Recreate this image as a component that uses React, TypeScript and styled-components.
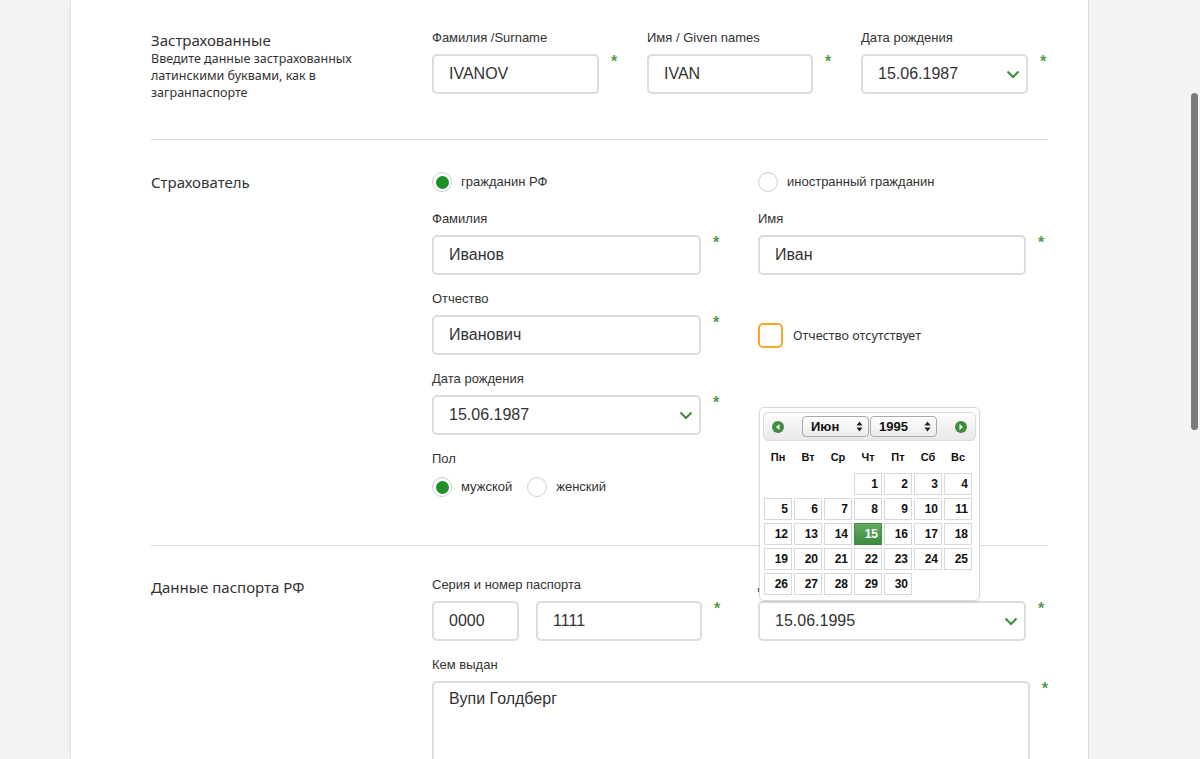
import React from 'react';
import styled, { createGlobalStyle } from 'styled-components';

const GlobalStyle = createGlobalStyle`
  html, body { margin: 0; padding: 0; background: #f3f3f3; overflow: hidden; }
  body { font-family: "Liberation Sans", Arial, sans-serif; color: #333; }
  * { box-sizing: border-box; }
`;

const Page = styled.div`
  height: 759px;
  display: flex;
  padding-left: 70px;
  overflow: hidden;
`;

const Panel = styled.main`
  width: 1019px;
  flex: none;
  background: #fff;
  border-left: 1px solid #e4e4e4;
  border-right: 1px solid #dcdcdc;
  box-shadow: -5px 0 6px -5px rgba(0, 0, 0, 0.08);
  padding: 0 40px 0 80px;
`;

const Section = styled.section<{ $top: number; $bottom: number; $last?: boolean }>`
  display: grid;
  grid-template-columns: 281px 1fr;
  padding: ${(p) => p.$top}px 0 ${(p) => p.$bottom}px;
  border-bottom: ${(p) => (p.$last ? 'none' : '1px solid #dcdcdc')};
`;

const Aside = styled.div`
  display: flex;
  flex-direction: column;
  font-family: "Noto Sans", "Open Sans", sans-serif;
  color: #333;
`;

const Title = styled.h2`
  margin: 0;
  font-size: 15px;
  line-height: 20px;
  font-weight: 400;
`;

const Hint = styled.p`
  margin: 0;
  font-size: 12.5px;
  line-height: 17px;
  width: 215px;
`;

const ThreeCols = styled.div`
  display: grid;
  grid-template-columns: 215px 214px auto;
  align-items: start;
`;

const TwoCols = styled.div`
  display: grid;
  grid-template-columns: 326px 1fr;
  row-gap: 16px;
  align-items: start;
`;

const Field = styled.div<{ $span?: boolean }>`
  display: flex;
  flex-direction: column;
  position: relative;
  grid-column: ${(p) => (p.$span ? '1 / span 2' : 'auto')};
`;

const Label = styled.label`
  font-size: 13px;
  line-height: 16px;
  margin-bottom: 8px;
  color: #333;
  white-space: nowrap;
`;

const Control = styled.div`
  display: flex;
  align-items: flex-start;
  position: relative;
`;

const Inputs = styled.div`
  display: flex;
  gap: 17px;
`;

const Input = styled.input<{ $w: number }>`
  width: ${(p) => p.$w}px;
  height: 40px;
  border: 2px solid #dcdcdc;
  border-radius: 5px;
  padding: 0 15px;
  font-family: "Liberation Sans", Arial, sans-serif;
  font-size: 16px;
  color: #333;
  background: #fff;
  outline: none;
`;

const TextArea = styled.textarea<{ $w: number }>`
  width: ${(p) => p.$w}px;
  height: 100px;
  border: 2px solid #dcdcdc;
  border-radius: 5px;
  padding: 6px 15px;
  font-family: "Liberation Sans", Arial, sans-serif;
  font-size: 16px;
  line-height: 20px;
  color: #333;
  resize: none;
  outline: none;
`;

const SelectBox = styled.div<{ $w: number }>`
  width: ${(p) => p.$w}px;
  height: 40px;
  border: 2px solid #dcdcdc;
  border-radius: 5px;
  padding: 0 6px 0 15px;
  display: flex;
  align-items: center;
  justify-content: space-between;
  font-size: 16px;
  color: #333;
  background: #fff;
`;

const Req = styled.span`
  color: #4f9d4f;
  font-weight: 700;
  font-size: 16px;
  line-height: 16px;
  margin-left: 12px;
  margin-top: 0px;
`;

const RadioRow = styled.div<{ $gap?: number }>`
  display: flex;
  gap: ${(p) => p.$gap ?? 15}px;
  align-items: center;
`;

const RadioOption = styled.label`
  display: flex;
  align-items: center;
  gap: 9px;
  font-size: 13px;
  line-height: 20px;
  height: 20px;
  color: #333;
`;

const RadioDot = styled.span<{ $on?: boolean }>`
  width: 20px;
  height: 20px;
  border-radius: 50%;
  border: 1px solid #d0d0d0;
  background: #fff;
  display: flex;
  align-items: center;
  justify-content: center;
  box-shadow: inset 0 1px 1px rgba(0, 0, 0, 0.04);
  &::after {
    content: '';
    width: 13px;
    height: 13px;
    border-radius: 50%;
    background: ${(p) => (p.$on ? '#1f8f28' : 'transparent')};
  }
`;

const TopRow = styled.div`
  margin-bottom: 3px;
  grid-column: 1 / span 2;
  display: grid;
  grid-template-columns: 326px 1fr;
  height: 20px;
`;

const CheckCell = styled.label`
  align-self: end;
  height: 40px;
  display: flex;
  align-items: center;
  gap: 10px;
  font-family: "Noto Sans", "Open Sans", sans-serif;
  font-size: 12.5px;
  color: #333;
`;

const CheckBox = styled.span`
  width: 25px;
  height: 25px;
  border: 2px solid #f7a823;
  border-radius: 5px;
  background: #fff;
`;

const GenderGroup = styled.div`
  display: flex;
  flex-direction: column;
  gap: 10px;
`;

const GenderLabel = styled.span`
  font-size: 13px;
  line-height: 16px;
`;

/* Calendar popup */
const Popup = styled.div`
  position: absolute;
  left: 1px;
  bottom: 100%;
  width: 221px;
  background: #fff;
  border: 1px solid #dadada;
  border-radius: 5px;
  padding: 4px 3px 5px;
  box-shadow: 0 1px 3px rgba(0, 0, 0, 0.08);
  z-index: 5;
`;

const CalHeader = styled.div`
  height: 29px;
  border: 1px solid #dcdcdc;
  border-radius: 5px;
  background: linear-gradient(#fdfdfd, #e8e8e8);
  display: flex;
  align-items: center;
  justify-content: space-between;
  padding: 0 8px;
`;

const NavBtn = styled.span`
  width: 12px;
  height: 12px;
  display: flex;
`;

const MiniSelects = styled.div`
  display: flex;
  gap: 1px;
`;

const MiniSelect = styled.div`
  width: 67px;
  height: 21px;
  border: 1px solid #a9a9a9;
  border-radius: 4px;
  background: linear-gradient(#ffffff, #ececec);
  display: flex;
  align-items: center;
  justify-content: space-between;
  padding: 0 5px 0 8px;
  font-size: 13px;
  font-weight: 700;
  color: #111;
`;

const CalGrid = styled.div`
  display: grid;
  grid-template-columns: repeat(7, 28px);
  column-gap: 2px;
  row-gap: 3px;
  margin-left: 1px;
`;

const DayName = styled.div`
  height: 32px;
  display: flex;
  align-items: center;
  justify-content: center;
  font-size: 11px;
  font-weight: 700;
  color: #111;
`;

const Cell = styled.div<{ $sel?: boolean; $empty?: boolean }>`
  height: 22px;
  border: 1px solid ${(p) => (p.$empty ? 'transparent' : p.$sel ? '#3f8d3f' : '#d9d9d9')};
  background: ${(p) => (p.$sel ? 'linear-gradient(#62ab62, #3e8c3e)' : '#fff')};
  color: ${(p) => (p.$sel ? '#fff' : '#111')};
  font-size: 12px;
  font-weight: 700;
  text-align: right;
  padding-right: 3px;
  line-height: 20px;
`;

const Scrollbar = styled.div`
  position: fixed;
  right: 2px;
  top: 93px;
  width: 7px;
  height: 337px;
  border-radius: 4px;
  background: #7b7b7b;
`;

const Chevron = () => (
  <svg width="14" height="9" viewBox="0 0 14 9">
    <polyline points="1.5,1.5 7,7 12.5,1.5" fill="none" stroke="#3d8d3d" strokeWidth="2" />
  </svg>
);

const UpDown = () => (
  <svg width="7" height="11" viewBox="0 0 7 11">
    <polygon points="3.5,0.5 6.5,4.5 0.5,4.5" fill="#222" />
    <polygon points="3.5,10.5 6.5,6.5 0.5,6.5" fill="#222" />
  </svg>
);

const Arrow = ({ dir }: { dir: 'l' | 'r' }) => (
  <svg width="12" height="12" viewBox="0 0 12 12">
    <circle cx="6" cy="6" r="6" fill="#3f8c3f" />
    {dir === 'l' ? (
      <polygon points="7.5,3 4,6 7.5,9" fill="#fff" />
    ) : (
      <polygon points="4.5,3 8,6 4.5,9" fill="#fff" />
    )}
  </svg>
);

const days = ['Пн', 'Вт', 'Ср', 'Чт', 'Пт', 'Сб', 'Вс'];

const Calendar = () => {
  const cells: (number | null)[] = [null, null, null];
  for (let d = 1; d <= 30; d++) cells.push(d);
  return (
    <Popup>
      <CalHeader>
        <NavBtn>
          <Arrow dir="l" />
        </NavBtn>
        <MiniSelects>
          <MiniSelect>
            Июн <UpDown />
          </MiniSelect>
          <MiniSelect>
            1995 <UpDown />
          </MiniSelect>
        </MiniSelects>
        <NavBtn>
          <Arrow dir="r" />
        </NavBtn>
      </CalHeader>
      <CalGrid>
        {days.map((d) => (
          <DayName key={d}>{d}</DayName>
        ))}
      </CalGrid>
      <CalGrid>
        {cells.map((c, i) =>
          c === null ? (
            <Cell key={i} $empty />
          ) : (
            <Cell key={i} $sel={c === 15}>
              {c}
            </Cell>
          )
        )}
      </CalGrid>
    </Popup>
  );
};

export default function App() {
  return (
    <>
      <GlobalStyle />
      <Page>
        <Panel>
          <Section $top={30} $bottom={38}>
            <Aside>
              <Title>Застрахованные</Title>
              <Hint>Введите данные застрахованных латинскими буквами, как в загранпаспорте</Hint>
            </Aside>
            <ThreeCols>
              <Field>
                <Label>Фамилия /Surname</Label>
                <Control>
                  <Input $w={167} defaultValue="IVANOV" readOnly />
                  <Req>*</Req>
                </Control>
              </Field>
              <Field>
                <Label>Имя / Given names</Label>
                <Control>
                  <Input $w={166} defaultValue="IVAN" readOnly />
                  <Req>*</Req>
                </Control>
              </Field>
              <Field>
                <Label>Дата рождения</Label>
                <Control>
                  <SelectBox $w={167}>
                    15.06.1987
                    <Chevron />
                  </SelectBox>
                  <Req>*</Req>
                </Control>
              </Field>
            </ThreeCols>
          </Section>

          <Section $top={32} $bottom={48}>
            <Aside>
              <Title>Страхователь</Title>
            </Aside>
            <TwoCols>
              <TopRow>
                <RadioOption>
                  <RadioDot $on />
                  гражданин РФ
                </RadioOption>
                <RadioOption>
                  <RadioDot />
                  иностранный гражданин
                </RadioOption>
              </TopRow>
              <Field>
                <Label>Фамилия</Label>
                <Control>
                  <Input $w={269} defaultValue="Иванов" readOnly />
                  <Req>*</Req>
                </Control>
              </Field>
              <Field>
                <Label>Имя</Label>
                <Control>
                  <Input $w={268} defaultValue="Иван" readOnly />
                  <Req>*</Req>
                </Control>
              </Field>
              <Field>
                <Label>Отчество</Label>
                <Control>
                  <Input $w={269} defaultValue="Иванович" readOnly />
                  <Req>*</Req>
                </Control>
              </Field>
              <CheckCell>
                <CheckBox />
                Отчество отсутствует
              </CheckCell>
              <Field>
                <Label>Дата рождения</Label>
                <Control>
                  <SelectBox $w={269}>
                    15.06.1987
                    <Chevron />
                  </SelectBox>
                  <Req>*</Req>
                </Control>
              </Field>
              <div />
              <GenderGroup>
                <GenderLabel>Пол</GenderLabel>
                <RadioRow>
                  <RadioOption>
                    <RadioDot $on />
                    мужской
                  </RadioOption>
                  <RadioOption>
                    <RadioDot />
                    женский
                  </RadioOption>
                </RadioRow>
              </GenderGroup>
            </TwoCols>
          </Section>

          <Section $top={31} $bottom={40} $last>
            <Aside>
              <Title>Данные паспорта РФ</Title>
            </Aside>
            <TwoCols>
              <Field>
                <Label>Серия и номер паспорта</Label>
                <Control>
                  <Inputs>
                    <Input $w={87} defaultValue="0000" readOnly />
                    <Input $w={166} defaultValue="1111" readOnly />
                  </Inputs>
                  <Req>*</Req>
                </Control>
              </Field>
              <Field>
                <Label>Дата выдачи</Label>
                <Control>
                  <Calendar />
                  <SelectBox $w={268}>
                    15.06.1995
                    <Chevron />
                  </SelectBox>
                  <Req>*</Req>
                </Control>
              </Field>
              <Field $span>
                <Label>Кем выдан</Label>
                <Control>
                  <TextArea $w={598} defaultValue="Вупи Голдберг" readOnly />
                  <Req>*</Req>
                </Control>
              </Field>
            </TwoCols>
          </Section>
        </Panel>
      </Page>
      <Scrollbar />
    </>
  );
}
